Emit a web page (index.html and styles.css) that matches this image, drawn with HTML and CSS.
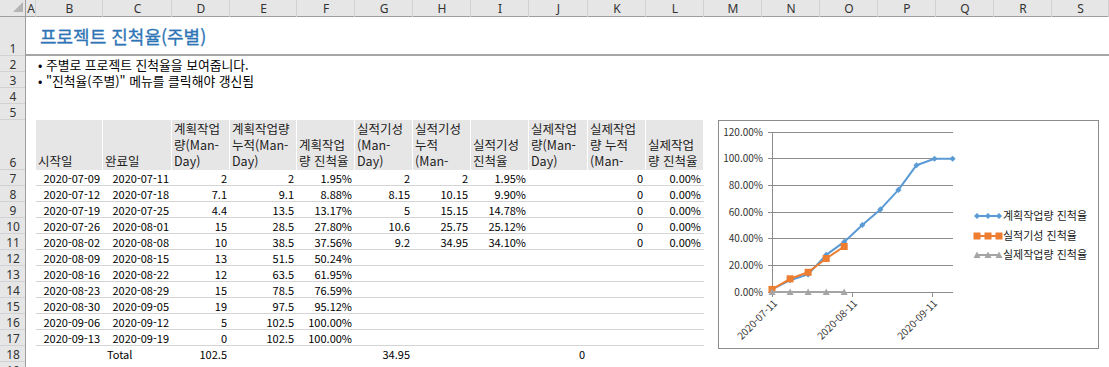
FILE: index.html
```html
<!DOCTYPE html>
<html lang="ko">
  <head>
    <meta charset="UTF-8" />
    <meta name="viewport" content="width=device-width, initial-scale=1" />
    <title>프로젝트 진척율(주별)</title>
    <link rel="stylesheet" href="styles.css">
  </head>
  <body>
    <div class="sheet-wrap">
      <table class="sheet">
        <colgroup>
          <col class="w-rn" /><col class="w-a" /><col class="w-b" /><col class="w-c" />
          <col class="w-n" /><col class="w-e" /><col class="w-n" /><col class="w-n" />
          <col class="w-n" /><col class="w-n" /><col class="w-j" /><col class="w-n" />
          <col class="w-n" /><col class="w-n" /><col class="w-n" /><col class="w-n" />
          <col class="w-n" /><col class="w-n" /><col class="w-n" /><col class="w-s" />
        </colgroup>
        <tr class="colhead">
          <th class="corner"><span class="tri"></span></th>
          <th>A</th><th>B</th><th>C</th><th>D</th><th>E</th><th>F</th><th>G</th>
          <th>H</th><th>I</th><th>J</th><th>K</th><th>L</th><th>M</th><th>N</th>
          <th>O</th><th>P</th><th>Q</th><th>R</th><th>S</th>
        </tr>
        <tr class="r1">
          <th class="rn">1</th>
          <td></td>
          <td colspan="18" class="title">프로젝트 진척율(주별)</td>
        </tr>
        <tr>
          <th class="rn">2</th><td></td>
          <td colspan="18" class="note">• 주별로 프로젝트 진척율을 보여줍니다.</td>
        </tr>
        <tr>
          <th class="rn">3</th><td></td>
          <td colspan="18" class="note">• "진척율(주별)" 메뉴를 클릭해야 갱신됨</td>
        </tr>
        <tr><th class="rn">4</th><td colspan="19"></td></tr>
        <tr><th class="rn">5</th><td colspan="19"></td></tr>
        <tr class="r6">
          <th class="rn">6</th><td></td>
          <td class="hd">시작일</td>
          <td class="hd">완료일</td>
          <td class="hd">계획작업<br />량(Man-<br />Day)</td>
          <td class="hd">계획작업량<br />누적(Man-<br />Day)</td>
          <td class="hd">계획작업<br />량 진척율</td>
          <td class="hd">실적기성<br />(Man-<br />Day)</td>
          <td class="hd">실적기성<br />누적<br />(Man-</td>
          <td class="hd">실적기성<br />진척율</td>
          <td class="hd">실제작업<br />량(Man-<br />Day)</td>
          <td class="hd">실제작업<br />량 누적<br />(Man-</td>
          <td class="hd">실제작업<br />량 진척율</td>
          <td colspan="7"></td>
        </tr>
        <tr>
          <th class="rn">7</th><td></td>
          <td class="t">2020-07-09</td><td class="t">2020-07-11</td><td class="t">2</td><td class="t">2</td><td class="t">1.95%</td>
          <td class="t">2</td><td class="t">2</td><td class="t">1.95%</td><td class="t"></td><td class="t">0</td><td class="t">0.00%</td>
          <td colspan="7"></td>
        </tr>
        <tr>
          <th class="rn">8</th><td></td>
          <td class="t">2020-07-12</td><td class="t">2020-07-18</td><td class="t">7.1</td><td class="t">9.1</td><td class="t">8.88%</td>
          <td class="t">8.15</td><td class="t">10.15</td><td class="t">9.90%</td><td class="t"></td><td class="t">0</td><td class="t">0.00%</td>
          <td colspan="7"></td>
        </tr>
        <tr>
          <th class="rn">9</th><td></td>
          <td class="t">2020-07-19</td><td class="t">2020-07-25</td><td class="t">4.4</td><td class="t">13.5</td><td class="t">13.17%</td>
          <td class="t">5</td><td class="t">15.15</td><td class="t">14.78%</td><td class="t"></td><td class="t">0</td><td class="t">0.00%</td>
          <td colspan="7"></td>
        </tr>
        <tr>
          <th class="rn">10</th><td></td>
          <td class="t">2020-07-26</td><td class="t">2020-08-01</td><td class="t">15</td><td class="t">28.5</td><td class="t">27.80%</td>
          <td class="t">10.6</td><td class="t">25.75</td><td class="t">25.12%</td><td class="t"></td><td class="t">0</td><td class="t">0.00%</td>
          <td colspan="7"></td>
        </tr>
        <tr>
          <th class="rn">11</th><td></td>
          <td class="t">2020-08-02</td><td class="t">2020-08-08</td><td class="t">10</td><td class="t">38.5</td><td class="t">37.56%</td>
          <td class="t">9.2</td><td class="t">34.95</td><td class="t">34.10%</td><td class="t"></td><td class="t">0</td><td class="t">0.00%</td>
          <td colspan="7"></td>
        </tr>
        <tr>
          <th class="rn">12</th><td></td>
          <td class="t">2020-08-09</td><td class="t">2020-08-15</td><td class="t">13</td><td class="t">51.5</td><td class="t">50.24%</td>
          <td class="t"></td><td class="t"></td><td class="t"></td><td class="t"></td><td class="t"></td><td class="t"></td>
          <td colspan="7"></td>
        </tr>
        <tr>
          <th class="rn">13</th><td></td>
          <td class="t">2020-08-16</td><td class="t">2020-08-22</td><td class="t">12</td><td class="t">63.5</td><td class="t">61.95%</td>
          <td class="t"></td><td class="t"></td><td class="t"></td><td class="t"></td><td class="t"></td><td class="t"></td>
          <td colspan="7"></td>
        </tr>
        <tr>
          <th class="rn">14</th><td></td>
          <td class="t">2020-08-23</td><td class="t">2020-08-29</td><td class="t">15</td><td class="t">78.5</td><td class="t">76.59%</td>
          <td class="t"></td><td class="t"></td><td class="t"></td><td class="t"></td><td class="t"></td><td class="t"></td>
          <td colspan="7"></td>
        </tr>
        <tr>
          <th class="rn">15</th><td></td>
          <td class="t">2020-08-30</td><td class="t">2020-09-05</td><td class="t">19</td><td class="t">97.5</td><td class="t">95.12%</td>
          <td class="t"></td><td class="t"></td><td class="t"></td><td class="t"></td><td class="t"></td><td class="t"></td>
          <td colspan="7"></td>
        </tr>
        <tr>
          <th class="rn">16</th><td></td>
          <td class="t">2020-09-06</td><td class="t">2020-09-12</td><td class="t">5</td><td class="t">102.5</td><td class="t">100.00%</td>
          <td class="t"></td><td class="t"></td><td class="t"></td><td class="t"></td><td class="t"></td><td class="t"></td>
          <td colspan="7"></td>
        </tr>
        <tr>
          <th class="rn">17</th><td></td>
          <td class="t">2020-09-13</td><td class="t">2020-09-19</td><td class="t">0</td><td class="t">102.5</td><td class="t">100.00%</td>
          <td class="t"></td><td class="t"></td><td class="t"></td><td class="t"></td><td class="t"></td><td class="t"></td>
          <td colspan="7"></td>
        </tr>
        <tr>
          <th class="rn">18</th><td></td>
          <td></td><td class="label">Total</td><td>102.5</td><td></td><td></td>
          <td>34.95</td><td></td><td></td><td>0</td><td></td><td></td>
          <td colspan="7"></td>
        </tr>
        <tr>
          <th class="rn">19</th><td colspan="19"></td>
        </tr>
      </table>

      <!-- chart floats over columns M..Q like an Excel chart object -->
      <div class="chart">
        <svg width="381" height="229" viewBox="0 0 381 229">
          <defs>
            <marker id="dia" viewBox="-4 -4 8 8" markerWidth="7" markerHeight="7" markerUnits="userSpaceOnUse">
              <path d="M0 -3.5 L3.5 0 L0 3.5 L-3.5 0 Z" fill="#5b9bd5" />
            </marker>
            <marker id="sq" viewBox="-4 -4 8 8" markerWidth="8" markerHeight="8" markerUnits="userSpaceOnUse">
              <rect x="-3.5" y="-3.5" width="7" height="7" fill="#ed7d31" />
            </marker>
            <marker id="tri" viewBox="-4 -4 8 8" markerWidth="8" markerHeight="8" markerUnits="userSpaceOnUse">
              <path d="M0 -3.5 L3.5 3 L-3.5 3 Z" fill="#a5a5a5" />
            </marker>
          </defs>

          <rect x="0.5" y="0.5" width="380" height="228" fill="#fff" stroke="#8c8c8c" />

          <g class="grid">
            <line x1="50" y1="12.5" x2="235" y2="12.5" />
            <line x1="50" y1="38.5" x2="235" y2="38.5" />
            <line x1="50" y1="65.5" x2="235" y2="65.5" />
            <line x1="50" y1="92.5" x2="235" y2="92.5" />
            <line x1="50" y1="118.5" x2="235" y2="118.5" />
            <line x1="50" y1="145.5" x2="235" y2="145.5" />
            <line x1="50" y1="172.5" x2="235" y2="172.5" />
            <line x1="54.5" y1="12" x2="54.5" y2="177" />
            <line x1="134.5" y1="172" x2="134.5" y2="177" />
            <line x1="214.5" y1="172" x2="214.5" y2="177" />
          </g>

          <g class="ylab">
            <text x="45" y="16">120.00%</text>
            <text x="45" y="42">100.00%</text>
            <text x="45" y="69">80.00%</text>
            <text x="45" y="96">60.00%</text>
            <text x="45" y="122">40.00%</text>
            <text x="45" y="149">20.00%</text>
            <text x="45" y="176">0.00%</text>
          </g>

          <g class="xlab">
            <text x="60" y="184" transform="rotate(-45 60 184)">2020-07-11</text>
            <text x="140" y="184" transform="rotate(-45 140 184)">2020-08-11</text>
            <text x="220" y="184" transform="rotate(-45 220 184)">2020-09-11</text>
          </g>

          <polyline class="s1" points="54,169.4 72.1,160.2 90.1,154.4 108.2,134.9 126.2,121.9 144.3,105 162.4,89.4 180.4,69.9 198.5,45.2 216.5,38.7 234.6,38.7" />
          <polyline class="s2" points="54,169.4 72.1,158.8 90.1,152.3 108.2,138.5 126.2,126.5" />
          <polyline class="s3" points="54,172 72.1,172 90.1,172 108.2,172 126.2,172" />

          <g class="legend">
            <polyline class="s1" points="259,96 270,96 281,96" />
            <text x="285" y="100">계획작업량 진척율</text>
            <polyline class="s2" points="259,116 270,116 281,116" />
            <text x="285" y="120">실적기성 진척율</text>
            <polyline class="s3" points="259,135 270,135 281,135" />
            <text x="285" y="139">실제작업량 진척율</text>
          </g>
        </svg>
      </div>
    </div>
  </body>
</html>
```

FILE: styles.css
```css
body {
  margin: 0;
  padding: 0;
  background-color: white;
  font-family: "Noto Sans CJK KR", "Noto Sans", sans-serif;
  color: #000;
}

.sheet-wrap {
  position: relative;
  width: 1109px;
  height: 367px;
  overflow: hidden;
}

.sheet {
  border-collapse: separate;
  border-spacing: 0;
  table-layout: fixed;
  width: 1109px;
  font-size: 11px;
}

.w-rn { width: 26px; }
.w-a { width: 10px; }
.w-b { width: 67px; }
.w-c { width: 69px; }
.w-e { width: 67px; }
.w-n { width: 58px; }
.w-j { width: 59px; }
.w-s { width: 57px; }

.sheet th,
.sheet td {
  height: 16px;
  padding: 0 3px 0 0;
  line-height: 15px;
  white-space: nowrap;
  overflow: hidden;
  font-weight: normal;
  text-align: right;
  vertical-align: middle;
}

/* column letters */
.colhead th {
  height: 17px;
  padding: 0;
  background-color: #e6e6e6;
  box-shadow: inset -1px 0 #d2d2d2, inset 0 -1px #9e9e9e;
  text-align: center;
  font-family: "Noto Sans", sans-serif;
  font-size: 12px;
  color: #333;
}

.colhead th.corner {
  text-align: right;
  vertical-align: bottom;
  box-shadow: inset -1px 0 #9e9e9e, inset 0 -1px #9e9e9e;
}

.tri {
  display: inline-block;
  width: 0;
  height: 0;
  margin: 0 3px 2px 0;
  border-left: 10px solid transparent;
  border-bottom: 10px solid #b4b4b4;
}

/* row numbers */
.sheet th.rn {
  padding: 0;
  background-color: #e6e6e6;
  box-shadow: inset -1px 0 #9e9e9e, inset 0 -1px #d2d2d2;
  text-align: center;
  vertical-align: bottom;
  font-family: "Noto Sans", sans-serif;
  font-size: 12px;
  line-height: 15px;
  color: #333;
}

.r1 th.rn,
.r1 td {
  height: 39px;
}

.r1 td {
  box-shadow: inset 0 -2px #a6a6a6;
}

.title {
  text-align: left !important;
  padding-left: 4px !important;
  font-size: 18px;
  font-weight: bold;
  -webkit-text-stroke: 0.3px #2e75b6;
  color: #2e75b6;
}

.note {
  text-align: left !important;
  padding-left: 2px !important;
  font-size: 12.8px;
}

/* table header row */
.r6 th.rn,
.r6 td {
  height: 49px;
}

.hd {
  background-color: #e7e6e6;
  box-shadow: inset -1px 0 #fff;
  text-align: left !important;
  vertical-align: bottom !important;
  padding: 0 2px 1px 2px !important;
  font-size: 12.5px;
  line-height: 16px !important;
  color: #222;
}

.t {
  box-shadow: inset 0 -1px #d4d4d4;
}

.label {
  text-align: left !important;
  padding-left: 4px !important;
}

/* chart */
.chart {
  position: absolute;
  left: 718px;
  top: 120px;
}

.chart svg {
  display: block;
  font-family: "Noto Sans CJK KR", "Noto Sans", sans-serif;
}

.grid line {
  stroke: #8c8c8c;
  stroke-width: 1;
}

.ylab text {
  font-size: 10px;
  fill: #333;
  text-anchor: end;
}

.xlab text {
  font-size: 10px;
  fill: #333;
  text-anchor: end;
}

.legend text {
  font-size: 11px;
  fill: #222;
}

.s1,
.s2,
.s3 {
  fill: none;
  stroke-width: 2;
  stroke-linejoin: round;
}

.s1 {
  stroke: #5b9bd5;
  marker-start: url(#dia);
  marker-mid: url(#dia);
  marker-end: url(#dia);
}

.s2 {
  stroke: #ed7d31;
  marker-start: url(#sq);
  marker-mid: url(#sq);
  marker-end: url(#sq);
}

.s3 {
  stroke: #a5a5a5;
  marker-start: url(#tri);
  marker-mid: url(#tri);
  marker-end: url(#tri);
}
```
